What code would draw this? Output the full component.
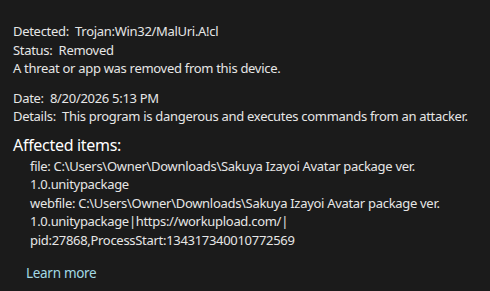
export default function App() {
  return (
    <div className="w-[490px] h-[291px] bg-[#1b1b1b] text-[#e6e6e6] pl-[13px] pt-[22px] text-[13px] leading-[18.5px] tracking-[-0.3px] font-['Noto_Sans',sans-serif] overflow-hidden">
      <div>
        <p>Detected:&nbsp; Trojan:Win32/MalUri.A!cl</p>
        <p>Status:&nbsp; Removed</p>
        <p>A threat or app was removed from this device.</p>
      </div>
      <div className="mt-[11px]">
        <p>Date:&nbsp; 8/20/2026 5:13 PM</p>
        <p>Details:&nbsp; This program is dangerous and executes commands from an attacker.</p>
      </div>
      <h2 className="mt-[8px] text-[16px] leading-[22px] text-white">Affected items:</h2>
      <div className="pl-[17px] mt-[1px]">
        <p>file: C:\Users\Owner\Downloads\Sakuya Izayoi Avatar package ver.<br />1.0.unitypackage</p>
        <p>webfile: C:\Users\Owner\Downloads\Sakuya Izayoi Avatar package ver.<br />1.0.unitypackage|https://workupload.com/|<br />pid:27868,ProcessStart:134317340010772569</p>
      </div>
      <a className="block ml-[13px] mt-[15px] text-[13.5px] text-[#a3d9e4]">Learn more</a>
    </div>
  );
}
